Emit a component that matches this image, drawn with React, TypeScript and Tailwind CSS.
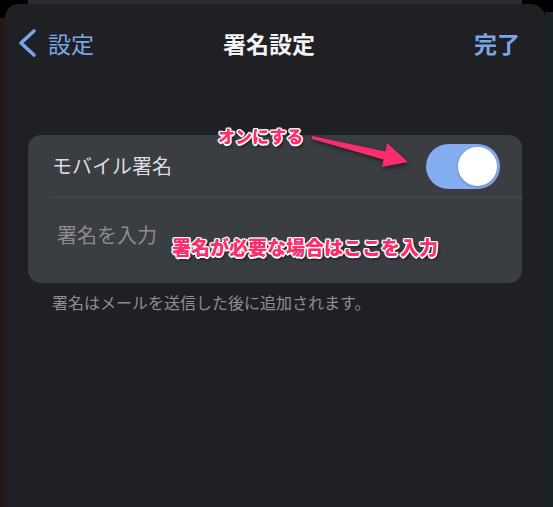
import React from 'react';

const jp = { fontFamily: '"Noto Sans CJK JP", "Noto Sans", sans-serif' };

// white outline + soft drop shadow used on the pink callouts
const outline =
  '[text-shadow:1.5px_0_0_#fff,-1.5px_0_0_#fff,0_1.5px_0_#fff,0_-1.5px_0_#fff,1px_1px_0_#fff,-1px_-1px_0_#fff,1px_-1px_0_#fff,-1px_1px_0_#fff,2px_3px_3px_rgba(0,0,0,0.55)]';

export default function App() {
  return (
    <div className="relative flex h-[507px] w-[553px] overflow-hidden bg-black" style={jp}>
      {/* edge of the screen behind the sheet */}
      <div className="flex w-[5px] flex-col">
        <div className="h-[18px] bg-black" />
        <div className="flex-1 bg-[#221918]" />
      </div>

      <div className="flex w-[540px] flex-col">
        <div className="mx-[23px] h-[4px] shrink-0 bg-[#2b2c30]" />

        <div className="flex-1 rounded-t-[14px] bg-[#1f2024]">
          {/* Nav bar */}
          <div className="grid h-[78px] grid-cols-[1fr_auto_1fr] items-center pl-[13px] pr-[25px]">
            <div className="flex items-center gap-[11px] text-[#7ba6e6]">
              <svg width="19" height="30" viewBox="0 0 19 30" fill="none">
                <polyline
                  points="16,3 3,15 16,27"
                  stroke="#7ba6e6"
                  strokeWidth="3.6"
                  strokeLinecap="round"
                  strokeLinejoin="round"
                />
              </svg>
              <span className="text-[23px] leading-none">設定</span>
            </div>
            <div className="text-[23px] font-bold leading-none text-[#f3f3f3]">署名設定</div>
            <div className="justify-self-end text-[23px] font-semibold leading-none text-[#7ba6e6]">完了</div>
          </div>

          {/* Signature card */}
          <div className="mx-[23px] mt-[53px] overflow-hidden rounded-[13px] bg-[#3a3d42]">
            <div className="flex h-[62px] items-center justify-between pl-6 pr-[22px]">
              <span className="text-[20px] leading-none text-[#dcdcde]">モバイル署名</span>
              <div className="flex h-[45px] w-[74px] items-center justify-end rounded-full bg-[#85aef0] p-[3px]">
                <div className="h-[39px] w-[39px] rounded-full bg-white shadow-[0_1px_3px_rgba(0,0,0,0.25)]" />
              </div>
            </div>
            <div className="ml-[23px] h-px bg-[#474a4f]" />
            <div className="h-[85px] pl-[29px] pt-[26px]">
              <span className="text-[20px] leading-none text-[#8b8c90]">署名を入力</span>
            </div>
          </div>

          <div className="mt-[11px] pl-[47px] text-[16px] leading-none text-[#8e8f93]">
            署名はメールを送信した後に追加されます。
          </div>
        </div>
      </div>

      <div className="flex flex-1 flex-col">
        <div className="h-[12px] bg-black" />
        <div className="flex-1 bg-[#1b2326]" />
      </div>

      {/* Annotations */}
      <div className={`absolute left-[218px] top-[127px] text-[17px] font-black leading-none text-[#fb2d6c] ${outline}`}>
        オンにする
      </div>
      <svg className="absolute left-0 top-0" width="553" height="507" viewBox="0 0 553 507">
        <polygon
          points="312,136 385.5,151.6 387,143 408,162 382,167 383.5,159.4 312,139"
          fill="#fb2d6c"
          style={{ filter: 'drop-shadow(1px 2px 2px rgba(0,0,0,0.5))' }}
        />
      </svg>
      <div className={`absolute left-[172px] top-[237px] text-[19px] font-black leading-none text-[#fb2d6c] ${outline}`}>
        署名が必要な場合はここを入力
      </div>
    </div>
  );
}
